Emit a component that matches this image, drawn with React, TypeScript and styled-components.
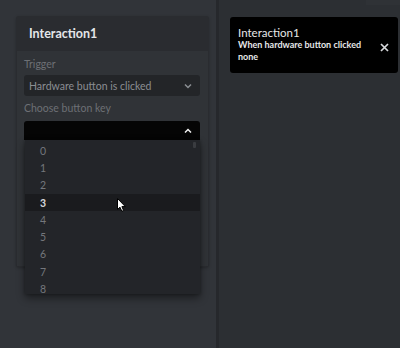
import React from "react";
import styled, { createGlobalStyle } from "styled-components";

const Global = createGlobalStyle`
  html, body { margin: 0; padding: 0; background: #2c2f33; }
  body { font-family: Lato, "Noto Sans", sans-serif; }
  * { box-sizing: border-box; }
`;

const Page = styled.div`
  position: relative;
  width: 400px;
  height: 348px;
  display: flex;
  overflow: hidden;
  background: #2c2f33;
`;

const LeftColumn = styled.div`
  width: 216px;
  flex: none;
  background: #313439;
  padding: 16px 7px 0 16px;
`;

const Divider = styled.div`
  width: 3px;
  flex: none;
  background: #26282c;
`;

const RightArea = styled.div`
  flex: 1;
  background: #2c2f33;
  display: flex;
  justify-content: flex-end;
  align-items: flex-start;
`;

const TopStrip = styled.div`
  width: 34px;
  height: 5px;
  background: #2f3236;
`;

const Card = styled.div`
  width: 193px;
  height: 251px;
  border-radius: 3px;
  background: #2a2c30;
  display: flex;
  flex-direction: column;
  box-shadow: 0 1px 3px rgba(0, 0, 0, 0.25);
`;

const CardHeader = styled.div`
  height: 35px;
  flex: none;
  display: flex;
  align-items: center;
  padding-left: 13px;
  color: #e4e6e9;
  font-size: 12.5px;
  font-weight: 700;
`;

const CardBody = styled.div`
  flex: 1;
  margin: 0 1px 1px 1px;
  background: #303337;
  padding: 3px 8px 0 7px;
  display: flex;
  flex-direction: column;
`;

const FieldLabel = styled.div<{ $gap: number }>`
  margin-top: ${(p) => p.$gap}px;
  color: #6d7075;
  font-size: 10.5px;
  line-height: 14px;
`;

const SelectBox = styled.div<{ $open?: boolean }>`
  position: relative;
  margin-top: ${(p) => (p.$open ? 6 : 4)}px;
  height: ${(p) => (p.$open ? 19 : 21)}px;
  border-radius: 3px 3px ${(p) => (p.$open ? "0 0" : "3px 3px")};
  background: ${(p) => (p.$open ? "#050505" : "#232528")};
  display: flex;
  align-items: center;
  justify-content: space-between;
  padding: 0 8px 0 5px;
  color: #8b8e93;
  font-size: 10.5px;
`;

const Menu = styled.div`
  position: absolute;
  top: 100%;
  left: 1px;
  right: 0;
  height: 154px;
  overflow: hidden;
  background: #232529;
  padding-top: 2px;
  box-shadow: 0 4px 8px rgba(0, 0, 0, 0.45), 0 0 3px rgba(0, 0, 0, 0.3);
  z-index: 2;
`;

const MenuItem = styled.div<{ $active?: boolean }>`
  height: 17.3px;
  flex: none;
  display: flex;
  align-items: center;
  padding-left: 15px;
  font-size: 10.5px;
  color: ${(p) => (p.$active ? "#d5d7da" : "#74777c")};
  font-weight: ${(p) => (p.$active ? 700 : 400)};
  background: ${(p) => (p.$active ? "#1a1b1e" : "transparent")};
`;

const ScrollThumb = styled.div`
  position: absolute;
  top: 2px;
  right: 4px;
  width: 3px;
  height: 6px;
  border-radius: 1px;
  background: #3a3c40;
`;

const Toast = styled.div`
  position: absolute;
  left: 230px;
  top: 17px;
  width: 168px;
  height: 56px;
  background: #000;
  border-radius: 3px;
  padding: 9px 8px 0 8px;
  display: flex;
  justify-content: space-between;
  z-index: 3;
`;

const ToastText = styled.div`
  display: flex;
  flex-direction: column;
  white-space: nowrap;
`;

const ToastTitle = styled.div`
  color: #e6e7e9;
  font-size: 11.5px;
  line-height: 13px;
`;

const ToastLine = styled.div`
  color: #e6e7e9;
  font-size: 9px;
  font-weight: 700;
  line-height: 12px;
`;

const CloseButton = styled.div`
  margin-top: 15px;
  width: 12px;
  height: 12px;
  display: flex;
  align-items: center;
  justify-content: center;
`;

const Cursor = styled.svg`
  position: absolute;
  left: 117px;
  top: 198px;
  z-index: 4;
`;

const Chevron = ({ up }: { up?: boolean }) => (
  <svg width="8" height="6" viewBox="0 0 8 6">
    <path
      d={up ? "M1 4.5 L4 1.5 L7 4.5" : "M1 1.5 L4 4.5 L7 1.5"}
      fill="none"
      stroke={up ? "#f2f2f2" : "#8b8e93"}
      strokeWidth="1.5"
    />
  </svg>
);

const keys = ["0", "1", "2", "3", "4", "5", "6", "7", "8"];

export default function App() {
  return (
    <>
      <Global />
      <Page>
        <LeftColumn>
          <Card>
            <CardHeader>Interaction1</CardHeader>
            <CardBody>
              <FieldLabel $gap={3}>Trigger</FieldLabel>
              <SelectBox>
                <span>Hardware button is clicked</span>
                <Chevron />
              </SelectBox>
              <FieldLabel $gap={5}>Choose button key</FieldLabel>
              <SelectBox $open>
                <span />
                <Chevron up />
                <Menu>
                  {keys.map((k) => (
                    <MenuItem key={k} $active={k === "3"}>
                      {k}
                    </MenuItem>
                  ))}
                  <ScrollThumb />
                </Menu>
              </SelectBox>
            </CardBody>
          </Card>
        </LeftColumn>
        <Divider />
        <RightArea>
          <TopStrip />
        </RightArea>
        <Toast>
          <ToastText>
            <ToastTitle>Interaction1</ToastTitle>
            <ToastLine>When hardware button clicked</ToastLine>
            <ToastLine>none</ToastLine>
          </ToastText>
          <CloseButton>
            <svg width="9" height="9" viewBox="0 0 9 9">
              <path d="M1 1 L8 8 M8 1 L1 8" stroke="#d8dadd" strokeWidth="1.7" />
            </svg>
          </CloseButton>
        </Toast>
        <Cursor width="10" height="15" viewBox="0 0 10 15">
          <path
            d="M0.5 0.5 L0.5 11.5 L3 9.2 L4.8 13.3 L6.6 12.5 L4.9 8.6 L8.3 8.6 Z"
            fill="#fff"
            stroke="#000"
            strokeWidth="1"
          />
        </Cursor>
      </Page>
    </>
  );
}
